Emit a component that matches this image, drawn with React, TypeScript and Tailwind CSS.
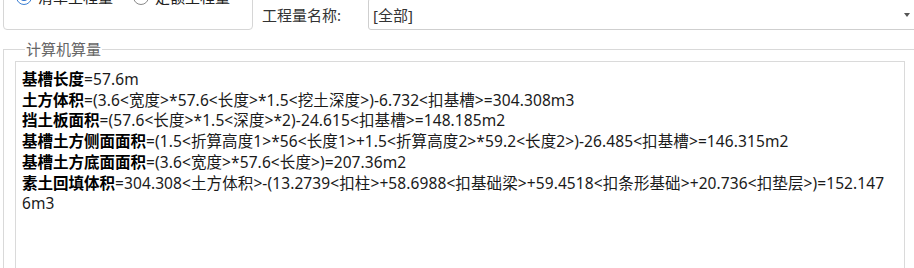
import React from 'react';

const lines: { label: string; body: string }[] = [
  { label: '基槽长度', body: '=57.6m' },
  { label: '土方体积', body: '=(3.6<宽度>*57.6<长度>*1.5<挖土深度>)-6.732<扣基槽>=304.308m3' },
  { label: '挡土板面积', body: '=(57.6<长度>*1.5<深度>*2)-24.615<扣基槽>=148.185m2' },
  {
    label: '基槽土方侧面面积',
    body: '=(1.5<折算高度1>*56<长度1>+1.5<折算高度2>*59.2<长度2>)-26.485<扣基槽>=146.315m2',
  },
  { label: '基槽土方底面面积', body: '=(3.6<宽度>*57.6<长度>)=207.36m2' },
  {
    label: '素土回填体积',
    body: '=304.308<土方体积>-(13.2739<扣柱>+58.6988<扣基础梁>+59.4518<扣条形基础>+20.736<扣垫层>)=152.147',
  },
  { label: '', body: '6m3' },
];

const Radio = ({ checked, text }: { checked?: boolean; text: string }) => (
  <div className="flex items-center gap-[6px]">
    <span
      className={`flex h-[16px] w-[16px] items-center justify-center rounded-full border bg-white ${
        checked ? 'border-[#3b7fd4]' : 'border-[#8a8a8a]'
      }`}
    >
      {checked && <span className="h-[8px] w-[8px] rounded-full bg-[#2f74cf]" />}
    </span>
    <span className="text-[15px] leading-[20px] text-[#222]">{text}</span>
  </div>
);

export default function App() {
  return (
    <div className="h-[268px] w-[914px] overflow-hidden bg-white font-['Noto_Sans','Noto_Sans_CJK_SC',sans-serif]">
      {/* top filter row, partly scrolled out of view */}
      <div className="-mt-[20px] flex items-start">
        <div className="ml-[3px] h-[50px] w-[250px] shrink-0 rounded-[4px] border border-[#d6d6d6] pl-[12px]">
          <div className="mt-[6px] flex h-[20px] items-center gap-[20px]">
            <Radio checked text="清单工程量" />
            <Radio text="定额工程量" />
          </div>
        </div>
        <div className="ml-[9px] mt-[26px] w-[106px] shrink-0 text-[15px] leading-[18px] text-[#333]">工程量名称:</div>
        <div className="mt-[18px] flex h-[32px] w-[560px] shrink-0 items-center rounded-[3px] border border-[#cfcfcf] pl-[4px] pt-[2px]">
          <span className="flex-1 text-[15px] text-[#333]">[全部]</span>
          <span className="mr-[17px] h-0 w-0 border-x-[3px] border-t-[4px] border-x-transparent border-t-[#555]" />
        </div>
      </div>

      <fieldset className="ml-[3px] mt-[10px] w-[930px] border border-[#d9d9d9] pl-[11px] pt-[3px]">
        <legend className="ml-[10px] px-[1px] text-[15px] leading-[18px] text-[#666]">计算机算量</legend>
        <div className="h-[260px] w-[890px] border border-[#dadada] pl-[6px] pt-[7px] text-[15.5px] leading-[20.7px] tracking-[0.1px] text-[#1a1a1a]">
          {lines.map((l, i) => (
            <div key={i} className="whitespace-nowrap">
              {l.label && <span className="font-bold tracking-normal text-black">{l.label}</span>}
              <span>{l.body}</span>
            </div>
          ))}
        </div>
      </fieldset>
    </div>
  );
}
